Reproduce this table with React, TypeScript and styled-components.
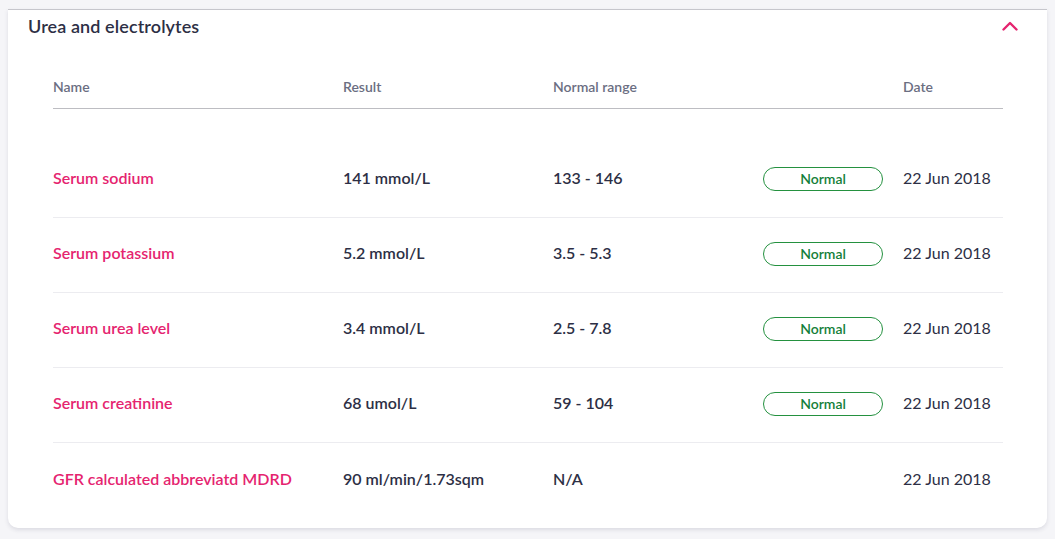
import React from "react";
import styled, { createGlobalStyle } from "styled-components";

const Global = createGlobalStyle`
  html, body { margin: 0; padding: 0; background: #f5f5f8; }
  body { font-family: Lato, "Open Sans", sans-serif; }
  * { box-sizing: border-box; }
`;

const Page = styled.div`
  padding: 9px 8px 10px 8px;
`;

const Card = styled.section`
  background: #ffffff;
  border-top: 1px solid #c6c6cc;
  border-radius: 0 0 10px 10px;
  box-shadow: 0 2px 4px rgba(40, 40, 70, 0.12);
  padding: 0 44px 10px 45px;
`;

const CardHeader = styled.div`
  display: flex;
  align-items: center;
  justify-content: space-between;
  height: 31px;
  margin-left: -25px;
  margin-right: -17px;
`;

const Title = styled.h2`
  margin: 0;
  font-size: 18px;
  font-weight: 600;
  color: #2d2f45;
  letter-spacing: 0.1px;
`;

const Toggle = styled.button`
  border: none;
  background: none;
  padding: 0;
  width: 20px;
  height: 20px;
  display: flex;
  align-items: center;
  justify-content: center;
  cursor: pointer;
`;

const cols = "290px 210px 210px 140px 1fr";

const HeadRow = styled.div`
  display: grid;
  grid-template-columns: ${cols};
  padding: 37px 0 12px;
  border-bottom: 1px solid #bdbdc2;
  margin-bottom: 34px;
`;

const HeadCell = styled.div`
  font-size: 14px;
  line-height: 18px;
  font-weight: 600;
  color: #6b6e82;
`;

const Row = styled.div<{ $last?: boolean }>`
  display: grid;
  grid-template-columns: ${cols};
  align-items: center;
  height: 75px;
  padding-bottom: 5px;
  border-bottom: ${(p) => (p.$last ? "none" : "1px solid #ececf0")};
`;

const NameCell = styled.div`
  font-size: 16px;
  font-weight: 600;
  color: #e5246f;
`;

const ValueCell = styled.div`
  font-size: 16px;
  font-weight: 600;
  color: #2d2f45;
`;

const DateCell = styled.div`
  font-size: 16px;
  font-weight: 400;
  color: #2d2f45;
`;

const Badge = styled.span`
  display: flex;
  align-items: center;
  justify-content: center;
  width: 120px;
  height: 24px;
  margin-top: 2px;
  border: 1px solid #24913f;
  border-radius: 12px;
  font-size: 14px;
  font-weight: 600;
  color: #15803a;
`;

type Result = {
  name: string;
  value: string;
  range: string;
  normal: boolean;
  date: string;
};

const results: Result[] = [
  { name: "Serum sodium", value: "141 mmol/L", range: "133 - 146", normal: true, date: "22 Jun 2018" },
  { name: "Serum potassium", value: "5.2 mmol/L", range: "3.5 - 5.3", normal: true, date: "22 Jun 2018" },
  { name: "Serum urea level", value: "3.4 mmol/L", range: "2.5 - 7.8", normal: true, date: "22 Jun 2018" },
  { name: "Serum creatinine", value: "68 umol/L", range: "59 - 104", normal: true, date: "22 Jun 2018" },
  { name: "GFR calculated abbreviatd MDRD", value: "90 ml/min/1.73sqm", range: "N/A", normal: false, date: "22 Jun 2018" },
];

const ChevronUp = () => (
  <svg width="16" height="10" viewBox="0 0 16 10">
    <path d="M1.5 8.5 L8 2 L14.5 8.5" fill="none" stroke="#e5246f" strokeWidth="2.4" strokeLinecap="round" strokeLinejoin="round" />
  </svg>
);

export default function App() {
  return (
    <Page>
      <Global />
      <Card>
        <CardHeader>
          <Title>Urea and electrolytes</Title>
          <Toggle aria-label="Collapse">
            <ChevronUp />
          </Toggle>
        </CardHeader>
        <HeadRow>
          <HeadCell>Name</HeadCell>
          <HeadCell>Result</HeadCell>
          <HeadCell>Normal range</HeadCell>
          <HeadCell />
          <HeadCell>Date</HeadCell>
        </HeadRow>
        {results.map((r, i) => (
          <Row key={r.name} $last={i === results.length - 1}>
            <NameCell>{r.name}</NameCell>
            <ValueCell>{r.value}</ValueCell>
            <ValueCell>{r.range}</ValueCell>
            <div>{r.normal && <Badge>Normal</Badge>}</div>
            <DateCell>{r.date}</DateCell>
          </Row>
        ))}
      </Card>
    </Page>
  );
}
